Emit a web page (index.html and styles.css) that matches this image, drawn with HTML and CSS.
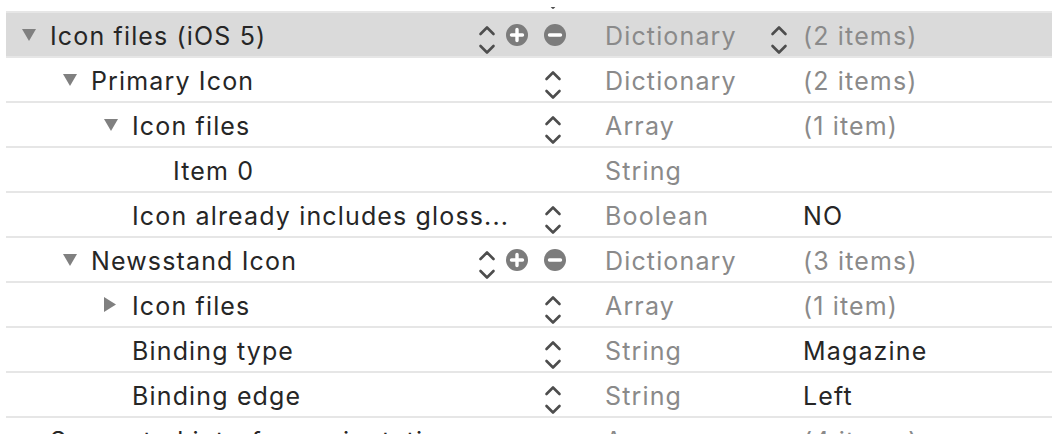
FILE: index.html
```html
<!DOCTYPE html>
<html lang="en">
<head>
<meta charset="utf-8">
<title>Info.plist</title>
<link rel="stylesheet" href="styles.css">
</head>
<body>
<svg width="0" height="0" class="defs">
  <defs>
    <symbol id="stepper" viewBox="0 0 20 34">
      <polyline points="3.5,12 10,5.5 16.5,12" fill="none" stroke="#4d4d4d" stroke-width="2.6" stroke-linecap="round" stroke-linejoin="round"/>
      <polyline points="3.5,24 10,30.5 16.5,24" fill="none" stroke="#4d4d4d" stroke-width="2.6" stroke-linecap="round" stroke-linejoin="round"/>
    </symbol>
    <symbol id="plus" viewBox="0 0 22 22">
      <circle cx="11" cy="11" r="11" fill="#7c7c7c"/>
      <path d="M11 5.5v11M5.5 11h11" stroke="#fff" stroke-width="3.4" stroke-linecap="round"/>
    </symbol>
    <symbol id="minus" viewBox="0 0 22 22">
      <circle cx="11" cy="11" r="11" fill="#7c7c7c"/>
      <path d="M5.5 11h11" stroke="#fff" stroke-width="3.4" stroke-linecap="round"/>
    </symbol>
    <symbol id="tri-down" viewBox="0 0 14 12">
      <path d="M0 0h14L7 12z" fill="#808080"/>
    </symbol>
    <symbol id="tri-right" viewBox="0 0 12 15">
      <path d="M0 0l12 7.5L0 15z" fill="#808080"/>
    </symbol>
  </defs>
</svg>

<div class="viewport">
  <div class="plist">

    <div class="row">
      <div class="key lvl0"><span class="disc"></span><span class="name">Bundle display name</span>
        <span class="controls"><svg class="stepper"><use href="#stepper"/></svg></span></div>
      <div class="type"><span class="tname">String</span></div>
      <div class="value"></div>
    </div>

    <div class="row selected">
      <div class="key lvl0"><span class="disc"><svg class="tri-down"><use href="#tri-down"/></svg></span><span class="name">Icon files (iOS 5)</span>
        <span class="controls wide"><svg class="stepper"><use href="#stepper"/></svg><svg class="pm plus"><use href="#plus"/></svg><svg class="pm minus"><use href="#minus"/></svg></span></div>
      <div class="type"><span class="tname">Dictionary</span><svg class="stepper"><use href="#stepper"/></svg></div>
      <div class="value muted">(2 items)</div>
    </div>

    <div class="row">
      <div class="key lvl1"><span class="disc"><svg class="tri-down"><use href="#tri-down"/></svg></span><span class="name">Primary Icon</span>
        <span class="controls"><svg class="stepper"><use href="#stepper"/></svg></span></div>
      <div class="type"><span class="tname">Dictionary</span></div>
      <div class="value muted">(2 items)</div>
    </div>

    <div class="row">
      <div class="key lvl2"><span class="disc"><svg class="tri-down"><use href="#tri-down"/></svg></span><span class="name">Icon files</span>
        <span class="controls"><svg class="stepper"><use href="#stepper"/></svg></span></div>
      <div class="type"><span class="tname">Array</span></div>
      <div class="value muted">(1 item)</div>
    </div>

    <div class="row">
      <div class="key lvl3"><span class="disc"></span><span class="name">Item 0</span>
        <span class="controls"></span></div>
      <div class="type"><span class="tname">String</span></div>
      <div class="value"></div>
    </div>

    <div class="row">
      <div class="key lvl2"><span class="disc"></span><span class="name">Icon already includes gloss...</span>
        <span class="controls"><svg class="stepper"><use href="#stepper"/></svg></span></div>
      <div class="type"><span class="tname">Boolean</span></div>
      <div class="value">NO</div>
    </div>

    <div class="row">
      <div class="key lvl1"><span class="disc"><svg class="tri-down"><use href="#tri-down"/></svg></span><span class="name">Newsstand Icon</span>
        <span class="controls wide"><svg class="stepper"><use href="#stepper"/></svg><svg class="pm plus"><use href="#plus"/></svg><svg class="pm minus"><use href="#minus"/></svg></span></div>
      <div class="type"><span class="tname">Dictionary</span></div>
      <div class="value muted">(3 items)</div>
    </div>

    <div class="row">
      <div class="key lvl2"><span class="disc"><svg class="tri-right"><use href="#tri-right"/></svg></span><span class="name">Icon files</span>
        <span class="controls"><svg class="stepper"><use href="#stepper"/></svg></span></div>
      <div class="type"><span class="tname">Array</span></div>
      <div class="value muted">(1 item)</div>
    </div>

    <div class="row">
      <div class="key lvl2"><span class="disc"></span><span class="name">Binding type</span>
        <span class="controls"><svg class="stepper"><use href="#stepper"/></svg></span></div>
      <div class="type"><span class="tname">String</span></div>
      <div class="value">Magazine</div>
    </div>

    <div class="row">
      <div class="key lvl2"><span class="disc"></span><span class="name">Binding edge</span>
        <span class="controls"><svg class="stepper"><use href="#stepper"/></svg></span></div>
      <div class="type"><span class="tname">String</span></div>
      <div class="value">Left</div>
    </div>

    <div class="row">
      <div class="key lvl0"><span class="disc"></span><span class="name">Supported interface orientations</span>
        <span class="controls"></span></div>
      <div class="type"><span class="tname">Array</span></div>
      <div class="value muted">(4 items)</div>
    </div>

  </div>
</div>
</body>
</html>
```

FILE: styles.css
```css
html, body {
  margin: 0;
  padding: 0;
  background: #ffffff;
}

body {
  font-family: "Inter", "Liberation Sans", sans-serif;
  font-size: 25px;
  letter-spacing: 1.15px;
  color: #262626;
}

.defs {
  position: absolute;
  width: 0;
  height: 0;
  overflow: hidden;
}

.viewport {
  margin-top: 7px;
  height: 427px;
  overflow: hidden;
}

.plist {
  margin-top: -39px;
  margin-left: 6px;
}

.row {
  display: grid;
  grid-template-columns: 562px 228px 1fr;
  height: 43px;
  box-sizing: content-box;
  border-bottom: 2px solid #e6e6e6;
}

.row > div {
  padding-top: 2px;
}

.row.selected {
  background: #dadada;
}

.key {
  display: flex;
  align-items: center;
  min-width: 0;
}

.lvl0 { padding-left: 16px; }
.lvl1 { padding-left: 57px; }
.lvl2 { padding-left: 98px; }
.lvl3 { padding-left: 139px; }

.disc {
  flex: 0 0 28px;
  display: flex;
  align-items: center;
  margin-top: -2px;
}

.tri-down {
  width: 14px;
  height: 12px;
}

.tri-right {
  width: 12px;
  height: 15px;
}

.name {
  flex: 1 1 auto;
  white-space: nowrap;
  overflow: hidden;
}

.controls {
  flex: 0 0 auto;
  display: flex;
  align-items: center;
  justify-content: flex-end;
  padding-right: 5px;
}

.controls.wide {
  padding-right: 2px;
}

.stepper {
  width: 20px;
  height: 34px;
  margin-top: 7px;
}

.pm {
  width: 22px;
  height: 22px;
  margin-top: -2px;
}

.pm.plus {
  margin-left: 9px;
}

.pm.minus {
  margin-left: 16px;
}

.type {
  display: flex;
  align-items: center;
  justify-content: space-between;
  padding-left: 37px;
  padding-right: 7px;
  color: #8a8a8a;
}

.value {
  display: flex;
  align-items: center;
  padding-left: 7px;
  color: #262626;
}

.value.muted {
  color: #8a8a8a;
}
```
